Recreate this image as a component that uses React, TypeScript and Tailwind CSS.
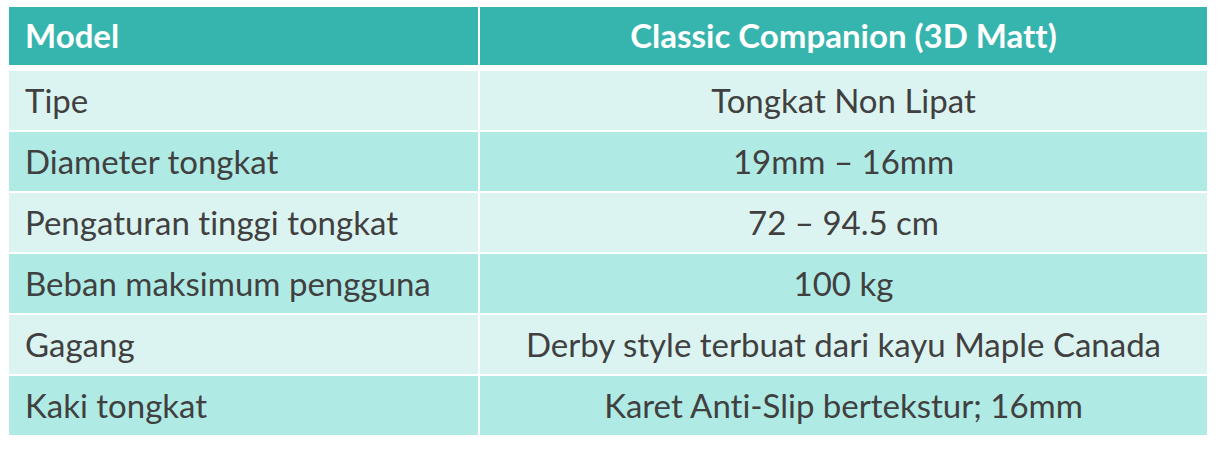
const rows: Array<[string, string]> = [
  ["Tipe", "Tongkat Non Lipat"],
  ["Diameter tongkat", "19mm – 16mm"],
  ["Pengaturan tinggi tongkat", "72 – 94.5 cm"],
  ["Beban maksimum pengguna", "100 kg"],
  ["Gagang", "Derby style terbuat dari kayu Maple Canada"],
  ["Kaki tongkat", "Karet Anti-Slip bertekstur; 16mm"],
];

export default function App() {
  return (
    <div className="w-[1220px] h-[449px] bg-white pt-[7px] pl-[9px] font-['Lato',sans-serif] [font-variant-ligatures:none]">
      <div className="w-[1198px] flex flex-col">
        {/* header */}
        <div className="flex h-[58px] gap-[2px] text-white font-bold text-[33px]">
          <div className="w-[469px] bg-[#36b5ae] flex items-center pl-[16px]">Model</div>
          <div className="flex-1 bg-[#36b5ae] flex items-center justify-center">
            Classic Companion (3D Matt)
          </div>
        </div>

        <div className="mt-[6px] flex flex-col gap-[2px] text-[33px] text-[#404040]">
          {rows.map(([label, value], i) => {
            const bg = i % 2 === 0 ? "bg-[#dcf4f1]" : "bg-[#b0eae4]";
            return (
              <div key={label} className="flex h-[59px] gap-[2px]">
                <div className={`w-[469px] ${bg} flex items-center pl-[16px]`}>{label}</div>
                <div className={`flex-1 ${bg} flex items-center justify-center`}>{value}</div>
              </div>
            );
          })}
        </div>
      </div>
    </div>
  );
}
